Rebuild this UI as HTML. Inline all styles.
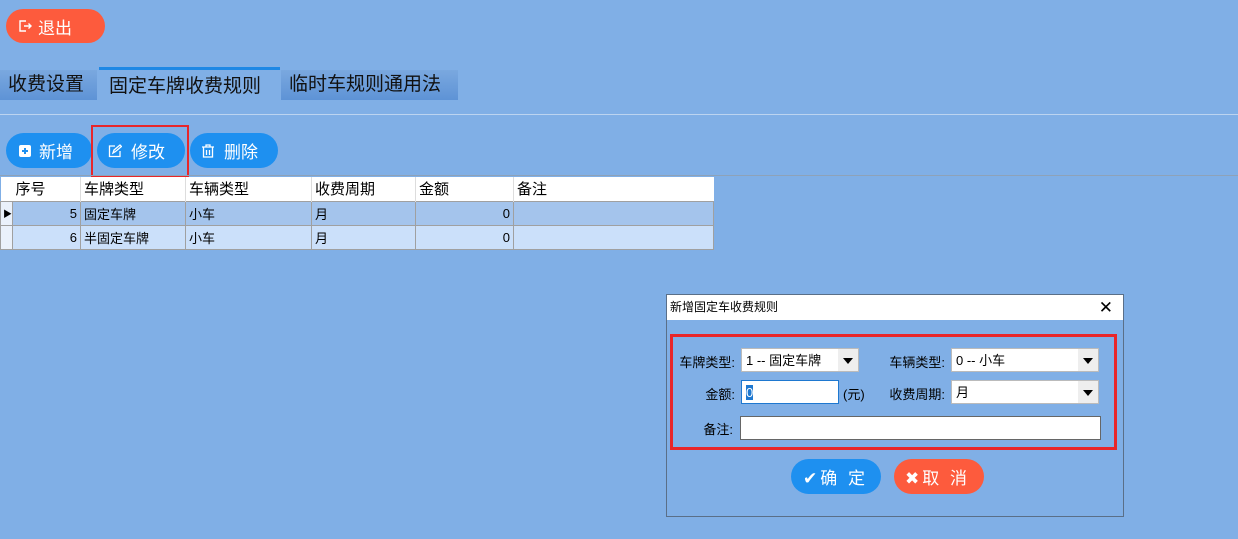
<!DOCTYPE html>
<html><head><meta charset="utf-8"><style>
*{margin:0;padding:0;box-sizing:border-box}
body{width:1238px;height:539px;background:#80afe6;position:relative;overflow:hidden;font-family:"Liberation Sans","Noto Sans CJK SC",sans-serif;color:#000}
.a{position:absolute}
.btn{position:absolute;border-radius:18px;color:#fff;font-size:17px;display:flex;align-items:center}
.tab{position:absolute;font-size:19px;top:70px;height:30px;line-height:30px;padding-left:8px}
table{border-collapse:collapse;font-size:13px;table-layout:fixed}
td{border:1px solid #a0a0a0;height:24px;padding:0 3px;white-space:nowrap;overflow:hidden}
.sel{position:absolute;background:#fff;height:24px;font-size:13px;line-height:24px;padding-left:4px;border:1px solid #bbb}
.sel i{position:absolute;right:0;top:0;width:20px;height:22px;background:#eee}
.sel i:after{content:"";position:absolute;left:5px;top:9px;border-left:5px solid transparent;border-right:5px solid transparent;border-top:6px solid #000}
.lbl{position:absolute;font-size:13px;text-align:right}
</style></head><body>
<div class="btn" style="left:6px;top:9px;width:99px;height:34px;background:#fd5b3d;padding-left:12px">
<svg width="14" height="14" viewBox="0 0 14 14" fill="none" stroke="#fff" stroke-width="1.4"><path d="M8 2H2v10h6M6 7h7M10.5 4.5L13 7l-2.5 2.5"/></svg><span style="margin-left:6px">退出</span></div>
<div class="tab" style="left:0;width:97px;background:linear-gradient(#7aa8df,#5e93d6);color:#111">收费设置</div>
<div class="tab" style="left:99px;top:67px;height:33px;line-height:33px;width:181px;border-top:3px solid #1e88e5;color:#111;padding-left:10px">固定车牌收费规则</div>
<div class="tab" style="left:281px;width:177px;background:linear-gradient(#7aa8df,#5e93d6);color:#111">临时车规则通用法</div>
<div class="a" style="left:0;top:114px;width:1238px;height:1px;background:#bcd4f0"></div>
<div class="btn" style="left:6px;top:133px;width:86px;height:35px;background:#1e90f0;padding-left:12px"><svg width="14" height="14"><rect x="1" y="1" width="12" height="12" rx="2" fill="#fff"/><path d="M7 4v6M4 7h6" stroke="#1e90f0" stroke-width="2"/></svg><span style="margin-left:7px">新增</span></div>
<div class="btn" style="left:97px;top:133px;width:88px;height:35px;background:#1e90f0;padding-left:11px"><svg width="14" height="14" fill="none" stroke="#fff" stroke-width="1.3"><path d="M7 2H1.5v10.5H12V7M5 9l1-3 6-5 1.5 1.5-6 5z"/></svg><span style="margin-left:9px">修改</span></div>
<div class="a" style="left:91px;top:125px;width:98px;height:53px;border:2px solid #e8262a"></div>
<div class="btn" style="left:190px;top:133px;width:88px;height:35px;background:#1e90f0;padding-left:11px"><svg width="14" height="14" fill="none" stroke="#fff" stroke-width="1.3"><path d="M1 3h12M5 3V1h4v2M2.5 3v10h9V3M5.5 6v5M8.5 6v5"/></svg><span style="margin-left:9px">删除</span></div>
<div class="a" style="left:0;top:175px;width:1238px;height:1px;background:#8ea2b8"></div>
<table class="a" style="left:0;top:177px;width:714px">
<colgroup><col style="width:12px"><col style="width:68px"><col style="width:105px"><col style="width:126px"><col style="width:104px"><col style="width:98px"><col></colgroup>
<tr style="background:#fff;font-size:15px"><td style="border:none;padding:0"></td><td style="border:none;border-right:1px solid #ddd">序号</td><td style="border:none;border-right:1px solid #ddd">车牌类型</td><td style="border:none;border-right:1px solid #ddd">车辆类型</td><td style="border:none;border-right:1px solid #ddd">收费周期</td><td style="border:none;border-right:1px solid #ddd">金额</td><td style="border:none">备注</td></tr>
<tr style="background:#a4c4ec"><td style="background:#eaf1fb;font-size:9px;padding:0 2px">▶</td><td style="text-align:right">5</td><td>固定车牌</td><td>小车</td><td>月</td><td style="text-align:right">0</td><td></td></tr>
<tr style="background:#cbe0fa"><td style="background:#eaf1fb"></td><td style="text-align:right">6</td><td>半固定车牌</td><td>小车</td><td>月</td><td style="text-align:right">0</td><td></td></tr>
</table>
<div class="a" style="left:666px;top:294px;width:458px;height:223px;border:1px solid #5a6f88;background:#80afe6">
<div style="background:#fff;height:25px;font-size:12px;line-height:25px;padding-left:3px;position:relative">新增固定车收费规则<span style="position:absolute;right:10px;top:0;font-size:17px">✕</span></div>
<div class="a" style="left:3px;top:39px;width:447px;height:116px;border:3px solid #e8262a"></div>
<div class="lbl" style="left:6px;top:57px;width:62px">车牌类型:</div>
<div class="sel" style="left:74px;top:53px;width:118px">1 -- 固定车牌<i></i></div>
<div class="lbl" style="left:212px;top:57px;width:66px">车辆类型:</div>
<div class="sel" style="left:284px;top:53px;width:148px">0 -- 小车<i></i></div>
<div class="lbl" style="left:18px;top:89px;width:50px">金额:</div>
<div class="sel" style="left:74px;top:85px;width:98px;border:1px solid #1e78d0"><span style="background:#1e78d0;color:#fff">0</span></div>
<div class="a" style="left:176px;top:89px;font-size:13px">(元)</div>
<div class="lbl" style="left:212px;top:89px;width:66px">收费周期:</div>
<div class="sel" style="left:284px;top:85px;width:148px">月<i></i></div>
<div class="lbl" style="left:18px;top:124px;width:48px">备注:</div>
<div class="sel" style="left:73px;top:121px;width:361px;border-color:#666"></div>
<div class="btn" style="left:124px;top:164px;width:90px;height:35px;background:#1e90f0;padding-left:12px;font-size:17px;letter-spacing:3px">✔确 定</div>
<div class="btn" style="left:227px;top:164px;width:90px;height:35px;background:#fd5b3d;padding-left:11px;font-size:17px;letter-spacing:3px">✖取 消</div>
</div>
</body></html>
